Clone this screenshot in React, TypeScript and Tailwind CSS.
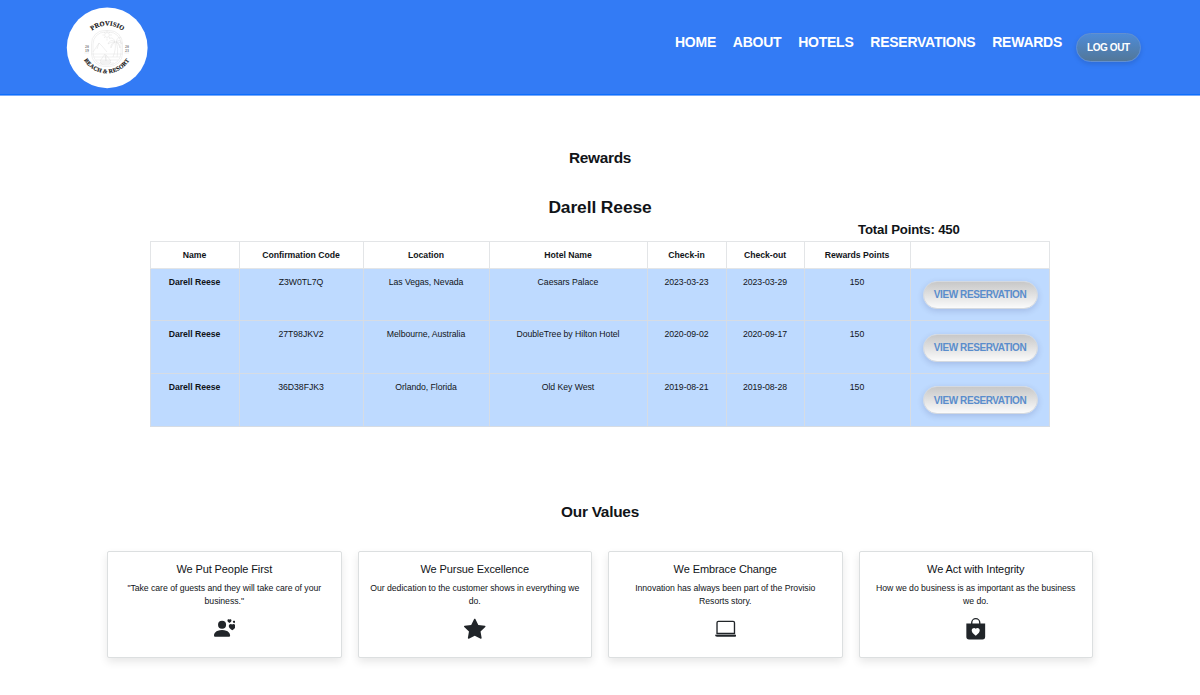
import React from "react";
import { BsBagHeartFill, BsLaptop, BsPersonHearts, BsStarFill } from "react-icons/bs";

const links = ["HOME", "ABOUT", "HOTELS", "RESERVATIONS", "REWARDS"];

const headings = ["Name", "Confirmation Code", "Location", "Hotel Name", "Check-in", "Check-out", "Rewards Points", ""];

const stays = [
  ["Z3W0TL7Q", "Las Vegas, Nevada", "Caesars Palace", "2023-03-23", "2023-03-29", "150"],
  ["27T98JKV2", "Melbourne, Australia", "DoubleTree by Hilton Hotel", "2020-09-02", "2020-09-17", "150"],
  ["36D38FJK3", "Orlando, Florida", "Old Key West", "2019-08-21", "2019-08-28", "150"],
];

const values = [
  { title: "We Put People First", text: "\"Take care of guests and they will take care of your business.\"", Icon: BsPersonHearts },
  { title: "We Pursue Excellence", text: "Our dedication to the customer shows in everything we do.", Icon: BsStarFill },
  { title: "We Embrace Change", text: "Innovation has always been part of the Provisio Resorts story.", Icon: BsLaptop },
  { title: "We Act with Integrity", text: "How we do business is as important as the business we do.", Icon: BsBagHeartFill },
];

function Logo() {
  return (
    <svg viewBox="0 0 82 82" className="h-[82px] w-[82px]">
      <defs>
        <path id="arc-top" d="M 20.5 29.5 A 25 25 0 0 1 62 29.5" />
        <path id="arc-bottom" d="M 14.5 41.5 A 26.3 26.3 0 0 0 67 41.5" />
      </defs>
      <circle cx="41.2" cy="40.8" r="40.4" fill="#fff" />
      <g fill="none" stroke="#d8d8d8" strokeWidth="0.4">
        <rect x="25.5" y="23.5" width="31" height="36" rx="13" />
        <rect x="27" y="25" width="28" height="33" rx="12" />
        <circle cx="41" cy="28" r="2.4" />
        <path d="M41 23.5v1.5M41 31.5v2M36.5 28h1.5M44 28h2M38 25l1 1M44 25l-1 1M38 31l1-1M44 31l-1-1" />
        <path d="M27 45l6-9 3 3 5 6M33 36l-2 6M25.5 47h31M28 50h26M30 53h22M34 56h14" />
        <path d="M49 35c1 5 0 10-2 15M50 35c2 5 2 10 1 15M49 35c-3-3-6-1-7 2 3-2 5-2 7-2zM49 35c-2 0-5 3-4 6 1-3 2-4 4-6zM50 35c3-3 6-1 6 2-2-2-4-2-6-2zM50 35c3 1 4 3 4 6-1-3-2-5-4-6zM49 35c-1-4-4-5-6-3M50 35c1-4 3-5 5-4" />
        <path d="M39 47l-5 7h6zM40 48l5 6h-5zM34 55h11l-2 2h-7z" />
        <path d="M18.5 46h4.5M58.5 46h4.5" />
      </g>
      <g fill="#777" fontFamily="Liberation Serif, serif" fontSize="3.8" fontWeight="700" textAnchor="middle">
        <text x="21" y="40.5">20</text>
        <text x="21" y="44.5">19</text>
        <text x="61" y="40.5">20</text>
        <text x="61" y="44.5">23</text>
      </g>
      <g fill="#111" stroke="#111" strokeWidth="0.15" fontFamily="Liberation Serif, serif" fontWeight="700" textAnchor="middle">
        <text fontSize="6.4" letterSpacing="0.15">
          <textPath href="#arc-top" startOffset="50.5%">PROVISIO</textPath>
        </text>
        <text fontSize="5.8" letterSpacing="0.2">
          <textPath href="#arc-bottom" startOffset="50%">BEACH <tspan fontStyle="italic">&amp;</tspan> RESORT</textPath>
        </text>
      </g>
    </svg>
  );
}

export default function App() {
  return (
    <div className="h-[695px] overflow-hidden bg-white text-center font-['Liberation_Sans',Arial,sans-serif] text-[#111418]">
      <header className="flex h-24 items-start border-b border-[#78a9fa] bg-[#337bf5] pl-[66px] pt-[6.5px] shadow-[inset_0_-1px_0_#0d6efd]">
        <Logo />
        <nav className="ml-[527px] mt-[25.5px] flex items-start text-[14px] font-bold leading-[20px] tracking-[-0.26px] text-white">
          {links.map((l) => (
            <a key={l} className="mr-[16.9px] whitespace-nowrap">{l}</a>
          ))}
        </nav>
        <button className="-ml-[3px] mt-[26.5px] h-[29px] w-[65px] whitespace-nowrap rounded-full border border-[#628fd0] bg-linear-to-b from-[#4d8bd8] to-[#527799] text-[10px] font-bold tracking-[-0.4px] text-white shadow-[0_2px_5px_#00000020]">
          LOG OUT
        </button>
      </header>

      <main>
        <h1 className="mt-[52px] text-[15.4px] font-bold leading-[20px] tracking-[-0.3px]">Rewards</h1>
        <h2 className="mt-[27px] text-[17.4px] font-bold leading-[24px] tracking-[-0.1px]">Darell Reese</h2>
        <p className="ml-[858px] whitespace-nowrap text-left text-[13.2px] font-bold leading-[21px] tracking-[-0.17px]">Total Points: 450</p>

        <table className="ml-[150px] mt-[1px] w-[899px] table-fixed border-collapse text-[8.7px] leading-[13px]">
          <colgroup>
            <col className="w-[89px]" />
            <col className="w-[124px]" />
            <col className="w-[126px]" />
            <col className="w-[158px]" />
            <col className="w-[79px]" />
            <col className="w-[78px]" />
            <col className="w-[106px]" />
            <col className="w-[139px]" />
          </colgroup>
          <thead>
            <tr className="h-[26.5px]">
              {headings.map((h, i) => (
                <th key={i} className="whitespace-nowrap border border-[#e3e5e7] p-0 pr-px pt-px font-bold tracking-[-0.04px]">{h}</th>
              ))}
            </tr>
          </thead>
          <tbody>
            {stays.map((s) => (
              <tr key={s[0]} className="h-[52.75px] bg-[#bedaff]">
                <th className="border border-[#d6dce4] p-0 pr-px pt-[7px] align-top font-bold tracking-[-0.04px]">Darell Reese</th>
                {s.map((c, i) => (
                  <td key={i} className="whitespace-nowrap border border-[#d6dce4] p-0 pr-px pt-[7px] align-top tracking-[-0.04px]">{c}</td>
                ))}
                <td className="border border-[#d6dce4] p-0 pt-px align-middle">
                  <button className="mx-auto block h-[28px] w-[115px] whitespace-nowrap rounded-full border border-[#d4d9e0] bg-linear-to-b from-[#c8c8c8] to-[#fbfbfb] text-[10px] font-bold tracking-[-0.4px] text-[#5a8dcc] shadow-[0_2px_6px_#00005024]">
                    VIEW RESERVATION
                  </button>
                </td>
              </tr>
            ))}
          </tbody>
        </table>

        <h2 className="mt-[75px] text-[15.4px] font-bold leading-[20px] tracking-[-0.25px]">Our Values</h2>
        <section className="mx-[107px] mt-[29.5px] grid grid-cols-4 gap-4">
          {values.map(({ title, text, Icon }) => (
            <article key={title} className="flex h-[107px] flex-col items-center rounded-[2px] border border-[#dcdfe0] bg-white px-[11.5px] pt-[9px] shadow-[0_4px_9px_#00000018]">
              <h3 className="text-[11px] leading-[16px] tracking-[-0.1px]">{title}</h3>
              <p className="mt-[5px] text-[8.7px] leading-[13px] tracking-[-0.04px]">{text}</p>
              <Icon className="mt-[10px] h-[21.5px] w-[21.5px] text-[#212529]" />
            </article>
          ))}
        </section>
      </main>
    </div>
  );
}
